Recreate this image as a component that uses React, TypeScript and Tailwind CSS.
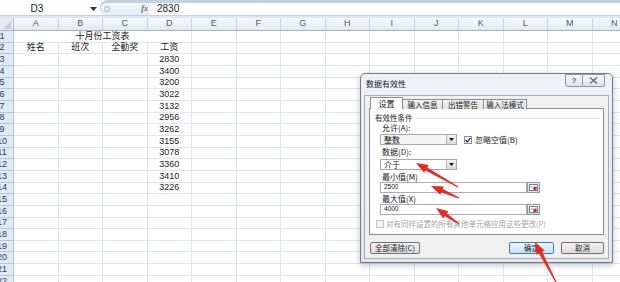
import React from "react"

const cols = ["A", "B", "C", "D", "E", "F", "G", "H", "I", "J", "K", "L", "M", "N"]
const wages = ["2830", "3400", "3200", "3022", "3132", "2956", "3262", "3155", "3078", "3360", "3410", "3226"]
const headers = ["姓名", "班次", "全勤奖", "工资"]

function arrowPoints(x1: number, y1: number, x2: number, y2: number, head = 12, hw = 4.5) {
  const dx = x2 - x1
  const dy = y2 - y1
  const len = Math.hypot(dx, dy)
  const ux = dx / len
  const uy = dy / len
  const nx = -uy
  const ny = ux
  const bx = x2 - ux * head
  const by = y2 - uy * head
  const pts = [
    [x1 + nx * 0.5, y1 + ny * 0.5],
    [bx + nx * 1.8, by + ny * 1.8],
    [bx + nx * hw, by + ny * hw],
    [x2, y2],
    [bx - nx * hw, by - ny * hw],
    [bx - nx * 1.8, by - ny * 1.8],
    [x1 - nx * 0.5, y1 - ny * 0.5],
  ]
  return pts.map((p) => p.join(",")).join(" ")
}

function FormulaBar() {
  return (
    <div className="flex h-[15px] bg-white">
      <div className="w-[100px] shrink-0 flex items-center pt-[3px]">
        <span className="w-[74px] text-center text-[10px] leading-none text-[#222]">D3</span>
        <span className="flex-1" />
        <svg width="7" height="4" className="mr-[3px]">
          <path d="M0 0 L7 0 L3.5 4 Z" fill="#333" />
        </svg>
      </div>
      <div className="w-[50px] shrink-0 flex items-center justify-between rounded-l-full border-t-[3px] border-l border-[#c3d0e0] bg-linear-to-b from-[#f4f7fb] to-[#e5ecf5] pl-[3px] pr-[2px]">
        <span className="w-[6px] h-[6px] rounded-full border border-[#9fb4cc] bg-[#e9f0f8]" />
        <span className="text-[8px] italic font-bold text-[#6b6b6b] font-['Liberation_Serif',serif]">fx</span>
      </div>
      <div className="flex-1 flex items-center border-t-[3px] border-[#c3d0e0] pl-[7px] text-[10px] leading-none text-[#222]">
        2830
      </div>
    </div>
  )
}

function Sheet() {
  const rows = Array.from({ length: 22 }, (_, i) => i + 1)
  return (
    <div className="flex flex-col">
      <div className="h-[3px] bg-[#dde6f1] border-t border-[#c5d1df]" />
      <div className="flex h-[13px] border-b border-[#9fb2c8]">
        <div className="w-[14px] shrink-0 bg-[#e1e9f3] border-r border-[#a9bbd0] flex items-end justify-end pr-[2px] pb-[1px]">
          <svg width="8" height="8">
            <path d="M8 0 L8 8 L0 8 Z" fill="#c4cfdc" />
          </svg>
        </div>
        {cols.map((c) => (
          <div
            key={c}
            className="w-[44.5px] shrink-0 border-r border-[#c9d4e1] bg-linear-to-b from-[#f8fafc] to-[#e3e9f1] flex items-center justify-center text-[9px] text-[#4b5c72]"
          >
            {c}
          </div>
        ))}
      </div>
      {rows.map((r) => (
        <div key={r} className="flex h-[11.67px] shrink-0">
          <div className="w-[14px] shrink-0 overflow-hidden bg-[#e2eaf5] border-r border-b border-[#b6c6da] flex items-center">
            <span className="w-[24px] -ml-[10px] shrink-0 text-center text-[9px] leading-none text-[#2c3c52]">{r}</span>
          </div>
          {r === 1 ? (
            <>
              <div className="w-[178px] shrink-0 border-r border-b border-[#dfe4ea] flex items-center justify-center text-[9px] text-[#222]">
                十月份工资表
              </div>
              {cols.slice(4).map((c) => (
                <div key={c} className="w-[44.5px] shrink-0 border-r border-b border-[#dfe4ea]" />
              ))}
            </>
          ) : (
            cols.map((c, ci) => {
              let text = ""
              if (r === 2 && ci < 4) text = headers[ci]
              if (r >= 3 && r <= 14 && ci === 3) text = wages[r - 3]
              return (
                <div
                  key={c}
                  className="w-[44.5px] shrink-0 border-r border-b border-[#dfe4ea] flex items-center justify-center text-[9px] leading-none text-[#222]"
                >
                  {text}
                </div>
              )
            })
          )}
        </div>
      ))}
    </div>
  )
}

function DropButton() {
  return (
    <div className="w-[10px] h-full border-l border-[#b5b5b5] bg-linear-to-b from-[#f4f4f4] to-[#dcdcdc] flex items-center justify-center">
      <svg width="5" height="3">
        <path d="M0 0 L5 0 L2.5 3 Z" fill="#111" />
      </svg>
    </div>
  )
}

function RangeButton() {
  return (
    <div className="w-[13px] h-[11px] shrink-0 border border-[#9a9a9a] bg-linear-to-b from-[#f0f0f0] to-[#d6d6d6] flex items-center justify-center">
      <svg width="9" height="7">
        <rect x="0.5" y="0.5" width="8" height="6" fill="#fff" stroke="#6d86a8" strokeWidth="1" />
        <path d="M0.5 3 H8.5" stroke="#9db0c8" strokeWidth="1" />
        <circle cx="6" cy="4.5" r="1.8" fill="#d42a20" />
      </svg>
    </div>
  )
}

function Dialog() {
  const label = "text-[8px] leading-[10px] h-[10px] text-[#1b1b1b]"
  return (
    <div className="absolute left-[360px] top-[73px] w-[253px] h-[190px] rounded-t-[5px] border border-[#727d8b] bg-linear-to-b from-[#eef2f7] to-[#e2e7ee] flex flex-col px-[3px] pb-[3px] shadow-[0_2px_6px_rgba(0,0,0,0.25)] font-['Noto_Sans_CJK_SC',sans-serif]">
      <div className="h-[21px] shrink-0 flex items-start justify-between">
        <span className="mt-[5px] pl-[2px] text-[8px] leading-[10px] text-[#1b1b1b]">数据有效性</span>
        <div className="flex mr-[4px]">
          <div className="w-[18px] h-[13px] border border-[#8c96a3] rounded-bl-[3px] bg-linear-to-b from-[#f7f9fb] to-[#dfe4ea] flex items-center justify-center text-[8px] font-bold text-[#55606e] font-['Liberation_Sans',sans-serif]">
            ?
          </div>
          <div className="w-[22px] h-[13px] border border-l-0 border-[#8c96a3] rounded-br-[3px] bg-linear-to-b from-[#f7f9fb] to-[#dfe4ea] flex items-center justify-center">
            <svg width="9" height="7">
              <path d="M1 0.5 L8 6.5 M8 0.5 L1 6.5" stroke="#5d6875" strokeWidth="1.3" />
            </svg>
          </div>
        </div>
      </div>
      <div className="flex-1 bg-[#f0f0f0] border border-[#a6b0bd] flex flex-col px-[4px] pt-[1px]">
        <div className="flex items-end h-[12px] -mb-px relative z-10">
          <div className="ml-[1px] w-[33px] h-[12px] bg-white border border-b-0 border-[#898c95] flex items-center justify-center text-[8px] text-[#1b1b1b]">
            设置
          </div>
          {[
            ["输入信息", "w-[40px]"],
            ["出错警告", "w-[41px]"],
            ["输入法模式", "w-[43px]"],
          ].map(([t, w]) => (
            <div
              key={t}
              className={`${w} h-[10px] border border-l-0 border-b-0 border-[#898c95] bg-linear-to-b from-[#f4f4f4] to-[#e1e1e1] flex items-center justify-center text-[7.5px] text-[#1b1b1b]`}
            >
              {t}
            </div>
          ))}
        </div>
        <div className="h-[127px] shrink-0 bg-white border border-[#898c95] flex flex-col pt-[4px]">
          <div className="flex items-center h-[10px]">
            <span className="ml-[5px] text-[7.5px] leading-[10px] text-[#1b1b1b]">有效性条件</span>
            <span className="flex-1 h-px bg-[#d5dde6] ml-[3px] mr-[4px]" />
          </div>
          <div className={`ml-[12px] ${label}`}>允许(A):</div>
          <div className="flex items-center mt-[1px] h-[11px]">
            <div className="ml-[10px] w-[77px] h-[11px] border border-[#a9a9a9] bg-[#f4f4f4] flex items-center">
              <span className="flex-1 pl-[3px] text-[8px] leading-none text-[#1b1b1b]">整数</span>
              <DropButton />
            </div>
            <div className="ml-[7px] w-[8px] h-[8px] border border-[#8e8f8f] bg-white flex items-center justify-center">
              <svg width="6" height="6">
                <path d="M0.5 3 L2.3 5 L5.5 0.8" fill="none" stroke="#1e3f8a" strokeWidth="1.3" />
              </svg>
            </div>
            <span className="ml-[3px] text-[8px] leading-none text-[#1b1b1b]">忽略空值(B)</span>
          </div>
          <div className={`mt-[2px] ml-[12px] ${label}`}>数据(D):</div>
          <div className="mt-[2px] ml-[10px] w-[77px] h-[11px] border border-[#a9a9a9] bg-white flex items-center">
            <span className="flex-1 pl-[3px] text-[8px] leading-none text-[#1b1b1b]">介于</span>
            <DropButton />
          </div>
          <div className={`mt-[2px] ml-[12px] ${label}`}>最小值(M)</div>
          <div className="flex ml-[10px] h-[11px]">
            <div className="w-[147px] h-[11px] border border-[#abadb3] bg-white flex items-center pl-[3px] text-[6.5px] leading-none text-[#1b1b1b] font-['Liberation_Sans',sans-serif]">
              2500
            </div>
            <RangeButton />
          </div>
          <div className={`mt-[1px] ml-[12px] ${label}`}>最大值(X)</div>
          <div className="flex ml-[10px] h-[11px]">
            <div className="w-[147px] h-[11px] border border-[#abadb3] bg-white flex items-center pl-[3px] text-[6.5px] leading-none text-[#1b1b1b] font-['Liberation_Sans',sans-serif]">
              4000
            </div>
            <RangeButton />
          </div>
          <div className="flex items-center mt-[4px] h-[10px]">
            <div className="ml-[6px] w-[8px] h-[8px] border border-[#c5c5c5] bg-[#f4f4f4]" />
            <span className="ml-[2px] text-[7.5px] leading-none text-[#a3a3a3]">对有同样设置的所有其他单元格应用这些更改(P)</span>
          </div>
        </div>
        <div className="flex items-center justify-between mt-[7px] h-[12px]">
          <div className="ml-[1px] w-[50px] h-[12px] rounded-[2px] border border-[#707070] bg-linear-to-b from-[#f3f3f3] to-[#dcdcdc] flex items-center justify-center text-[7.5px] leading-none text-[#1b1b1b]">
            全部清除(C)
          </div>
          <div className="flex gap-[7px]">
            <div className="w-[45px] h-[12px] rounded-[2px] border border-[#3c7fb1] bg-linear-to-b from-[#eaf6fd] to-[#c4e3f6] flex items-center justify-center text-[7.5px] leading-none text-[#1b1b1b]">
              确定
            </div>
            <div className="w-[43px] h-[12px] rounded-[2px] border border-[#707070] bg-linear-to-b from-[#f3f3f3] to-[#dcdcdc] flex items-center justify-center text-[7.5px] leading-none text-[#1b1b1b]">
              取消
            </div>
          </div>
        </div>
      </div>
    </div>
  )
}

export default function App() {
  const arrows: [number, number, number, number][] = [
    [458, 187, 416, 163],
    [459, 198, 431, 186],
    [459, 224, 436, 208],
    [557, 284, 535, 242],
  ]
  return (
    <div className="relative w-[620px] h-[282px] overflow-hidden bg-white font-['Liberation_Sans','Noto_Sans_CJK_SC',sans-serif]">
      <FormulaBar />
      <Sheet />
      <Dialog />
      <svg className="absolute left-0 top-0 pointer-events-none" width="620" height="282">
        {arrows.map(([a, b, c, d], i) => (
          <polygon key={i} points={arrowPoints(a, b, c, d)} fill="#e8291f" />
        ))}
      </svg>
    </div>
  )
}
